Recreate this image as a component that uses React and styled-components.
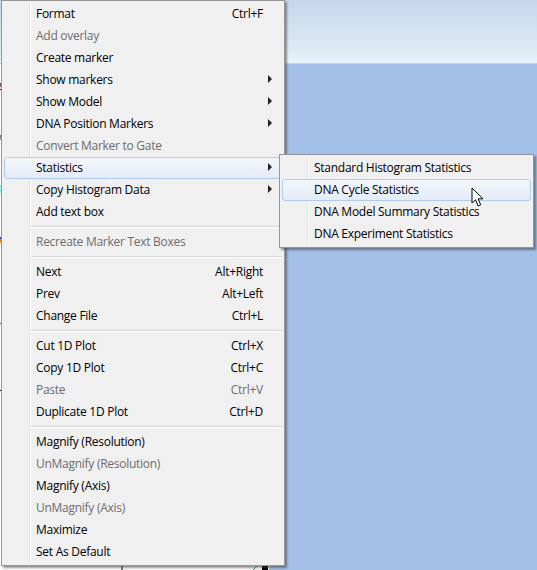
import styled, { createGlobalStyle } from 'styled-components';

const GlobalStyle = createGlobalStyle`
  html, body {
    margin: 0;
    padding: 0;
    overflow: hidden;
  }
  body {
    font-family: "Open Sans", "Liberation Sans", sans-serif;
  }
`;

const Desktop = styled.div`
  position: relative;
  width: 537px;
  height: 570px;
  overflow: hidden;
  display: flex;
  flex-direction: column;
  background: #a2c0e8;
`;
const TitleBand = styled.div`
  height: 63px;
  flex-shrink: 0;
  background: linear-gradient(#c6d7eb, #dbe8f4 70%, #e6f4fb);
  border-bottom: 1px solid #a9dcec;
`;
const PlotArea = styled.div`
  flex: 1;
  display: flex;
`;
const Plot = styled.svg`
  display: block;
  width: 269px;
  height: 506px;
  background: #fff;
`;
const Menu = styled.div`
  position: absolute;
  left: ${props => props.left}px;
  top: ${props => props.top}px;
  width: ${props => props.width}px;
  box-sizing: border-box;
  padding: 2px;
  background: #f0f0f0;
  border: 1px solid #979797;
  box-shadow: 2px 2px 2px rgba(60, 60, 60, 0.55);
  &::before {
    content: '';
    position: absolute;
    top: 2px;
    bottom: 2px;
    left: 27px;
    width: 1px;
    background: #e2e3e3;
    border-right: 1px solid #fff;
  }
`;
const Row = styled.div`
  position: relative;
  height: 22px;
  box-sizing: border-box;
  display: flex;
  align-items: center;
  padding: 0 0 2px 31px;
  font-size: 12px;
  letter-spacing: -0.27px;
  white-space: nowrap;
  color: ${props => (props.disabled ? '#6d6d6d' : '#000')};
  border: 1px solid ${props => (props.active ? '#aeccf1' : 'transparent')};
  border-radius: 3px;
  background: ${props =>
    props.active ? 'linear-gradient(#f3f6fb, #e4ecf8)' : 'transparent'};
`;
const Label = styled.span`
  flex: 1;
`;
const Shortcut = styled.span`
  width: 52px;
  margin-right: 18px;
  text-align: right;
`;
const Arrow = styled.span`
  position: absolute;
  right: 9px;
  top: 5px;
  width: 0;
  height: 0;
  border-style: solid;
  border-width: 4px 0 4px 4px;
  border-color: transparent transparent transparent #222;
`;
const Separator = styled.div`
  height: 8px;
  margin-left: 27px;
  display: flex;
  align-items: center;
  &::after {
    content: '';
    display: block;
    width: 100%;
    height: 1px;
    background: #d7d7d7;
    border-bottom: 1px solid #fff;
  }
`;
const Cursor = styled.svg`
  position: absolute;
  left: 471px;
  top: 187px;
`;

const mainItems = [
  { label: 'Format', shortcut: 'Ctrl+F' },
  { label: 'Add overlay', disabled: true },
  { label: 'Create marker' },
  { label: 'Show markers', sub: true },
  { label: 'Show Model', sub: true },
  { label: 'DNA Position Markers', sub: true },
  { label: 'Convert Marker to Gate', disabled: true },
  { label: 'Statistics', sub: true, active: true },
  { label: 'Copy Histogram Data', sub: true },
  { label: 'Add text box' },
  { separator: true },
  { label: 'Recreate Marker Text Boxes', disabled: true },
  { separator: true },
  { label: 'Next', shortcut: 'Alt+Right' },
  { label: 'Prev', shortcut: 'Alt+Left' },
  { label: 'Change File', shortcut: 'Ctrl+L' },
  { separator: true },
  { label: 'Cut 1D Plot', shortcut: 'Ctrl+X' },
  { label: 'Copy 1D Plot', shortcut: 'Ctrl+C' },
  { label: 'Paste', shortcut: 'Ctrl+V', disabled: true },
  { label: 'Duplicate 1D Plot', shortcut: 'Ctrl+D' },
  { separator: true },
  { label: 'Magnify (Resolution)' },
  { label: 'UnMagnify (Resolution)', disabled: true },
  { label: 'Magnify (Axis)' },
  { label: 'UnMagnify (Axis)', disabled: true },
  { label: 'Maximize' },
  { label: 'Set As Default' },
];

const subItems = [
  { label: 'Standard Histogram Statistics' },
  { label: 'DNA Cycle Statistics', active: true },
  { label: 'DNA Model Summary Statistics' },
  { label: 'DNA Experiment Statistics' },
];

function MenuRows({ items }) {
  return items.map((item, i) =>
    item.separator ? (
      <Separator key={i} />
    ) : (
      <Row key={i} disabled={item.disabled} active={item.active}>
        <Label>{item.label}</Label>
        {item.shortcut && <Shortcut>{item.shortcut}</Shortcut>}
        {item.sub && <Arrow />}
      </Row>
    ),
  );
}

function App() {
  return (
    <>
      <GlobalStyle />
      <Desktop>
        <TitleBand />
        <PlotArea>
          <Plot viewBox="0 0 269 506">
            {/* bits of the plot that show beside and under the menu */}
            <rect x="0" y="19" width="1" height="2" fill="#3a4a9a" />
            <rect x="0" y="21" width="1" height="2" fill="#c0504d" />
            <rect x="0" y="25" width="1" height="1" fill="#000" />
            <rect x="0" y="71" width="1" height="2" fill="#2f7fd0" />
            <rect x="0" y="73" width="1" height="3" fill="#e08a2c" />
            <rect x="0" y="121" width="1" height="8" fill="#a5ecef" />
            <rect x="0" y="173" width="1" height="2" fill="#2f3f9a" />
            <rect x="0" y="175" width="1" height="4" fill="#e08a2c" />
            <rect x="0" y="259" width="1" height="1" fill="#2e8b3a" />
            <rect x="0" y="326" width="1" height="1" fill="#000" />
            <path d="M122 500v6" stroke="#000" />
            <path d="M253 506l4-4" stroke="#2e8b3a" />
            <rect x="262" y="501" width="6" height="5" fill="#000" />
          </Plot>
        </PlotArea>
        <Menu left={1} top={0} width={284}>
          <MenuRows items={mainItems} />
        </Menu>
        <Menu left={279} top={154} width={255}>
          <MenuRows items={subItems} />
        </Menu>
        <Cursor width="14" height="22" viewBox="0 0 14 22">
          <path
            d="M1 1v15l3.5-3.2 2.6 6.2 2.6-1.1-2.6-6.1H12z"
            fill="#fff"
            stroke="#000"
            strokeWidth="1"
          />
        </Cursor>
      </Desktop>
    </>
  );
}

export default App;
